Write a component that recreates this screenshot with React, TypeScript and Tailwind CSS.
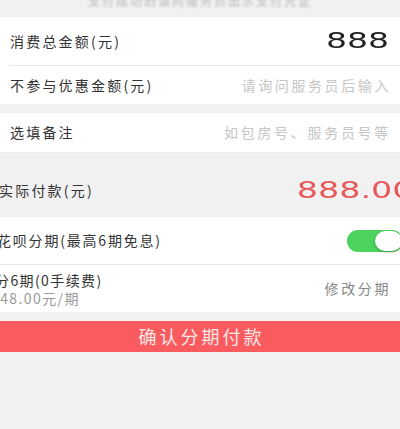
import React from 'react';

// 分期付款确认页
export default function App() {
  return (
    <div className="min-h-[429px] w-[400px] overflow-hidden bg-[#f1f1f1] font-['Noto_Sans_CJK_SC','Noto_Sans',sans-serif] text-[#333]">
      {/* blurred hint at top */}
      <div className="h-[17px] overflow-hidden">
        <p className="-mt-[8px] text-center text-[12px] tracking-[2px] text-[#b5b5b5] blur-[1.2px]">支付成功后请向服务员出示支付凭证</p>
      </div>

      {/* amount card */}
      <div className="bg-white">
        <div className="ml-[9px] flex h-[49px] items-center justify-between border-b border-[#e6e6e6] pr-[11px]">
          <span className="pl-[1px] text-[14px] tracking-[2.2px]">消费总金额(元)</span>
          <span className="origin-right scale-x-[1.5] font-['DejaVu_Sans',sans-serif] text-[22px] leading-none text-[#222]">888</span>
        </div>
        <div className="flex h-[38px] items-center justify-between pl-[10px] pr-[9px]">
          <span className="text-[14px] tracking-[2.2px]">不参与优惠金额(元)</span>
          <span className="text-[14px] tracking-[2.6px] text-[#c6c6c6]">请询问服务员后输入</span>
        </div>
      </div>

      {/* note */}
      <div className="mt-[9px] flex h-[39px] items-center justify-between bg-white pl-[10px] pr-[9px]">
        <span className="text-[14px] tracking-[2.2px]">选填备注</span>
        <span className="text-[14px] tracking-[2.7px] text-[#c6c6c6]">如包房号、服务员号等</span>
      </div>

      {/* payment part, slightly shifted */}
      <div className="-ml-[3px] mt-[5px] w-[416px]">
        <div className="flex h-[60px] items-center justify-between border-t border-[#e9e9e9] pl-[2px] pt-[6px]">
          <span className="text-[14px] tracking-[2.2px]">实际付款(元)</span>
          <span className="origin-right scale-x-[1.45] font-['DejaVu_Sans',sans-serif] text-[23px] leading-none text-[#e8585b]">888.00</span>
        </div>

        <div className="flex h-[48px] items-center justify-between border-b border-[#e8e8e8] bg-white pr-[10px]">
          <span className="text-[14px] tracking-[1.8px]">花呗分期(最高6期免息)</span>
          <div className="relative h-[22px] w-[56px] rounded-full bg-[#4cd35c]">
            <div className="absolute right-[1px] top-[1px] h-[20px] w-[27px] rounded-full bg-white shadow-[0_1px_3px_rgba(0,0,0,0.3)]" />
          </div>
        </div>

        <div className="flex h-[47px] items-center justify-between bg-white pr-[22px]">
          <div className="-ml-[2px] flex flex-col">
            <span className="text-[14px] leading-[18px] tracking-[1.4px]">分6期(0手续费)</span>
            <span className="-ml-[4px] text-[14px] leading-[18px] tracking-[1.4px] text-[#999]">148.00元/期</span>
          </div>
          <span className="text-[14px] tracking-[2.6px] text-[#888]">修改分期</span>
        </div>
      </div>

      {/* confirm button */}
      <div className="mt-[9px] flex h-[31px] w-full items-center justify-center bg-[#fa5b5f] pl-[3px]">
        <span className="text-[18px] tracking-[3px] text-[#fde8e8]">确认分期付款</span>
      </div>
    </div>
  );
}
